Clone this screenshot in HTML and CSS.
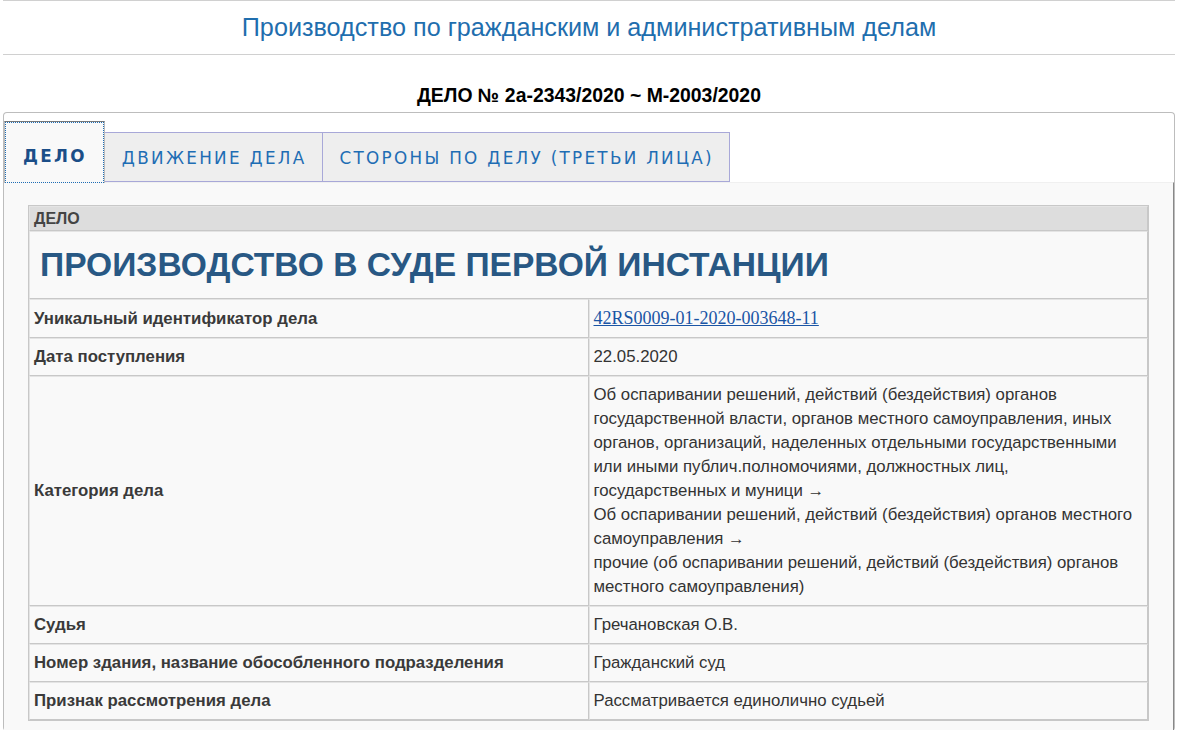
FILE: index.html
```html
<!DOCTYPE html>
<html lang="ru">

<head>
  <meta charset="UTF-8" />
  <title>Производство по гражданским и административным делам</title>
  <link rel="stylesheet" href="styles.css">
</head>

<body>
  <div class="pageTitle">Производство по гражданским и административным делам</div>

  <h2 class="caseNo">ДЕЛО № 2а-2343/2020 ~ М-2003/2020</h2>

  <div class="tabsBox">
    <ul class="tabs">
      <li class="tab active"><a href="#">ДЕЛО</a></li>
      <li class="tab"><a href="#">ДВИЖЕНИЕ ДЕЛА</a></li>
      <li class="tab"><a href="#">СТОРОНЫ ПО ДЕЛУ (ТРЕТЬИ ЛИЦА)</a></li>
    </ul>

    <div class="panel">
      <table class="caseTable">
        <tr>
          <th class="tableHead" colspan="2">ДЕЛО</th>
        </tr>
        <tr>
          <td class="instance" colspan="2">ПРОИЗВОДСТВО В СУДЕ ПЕРВОЙ ИНСТАНЦИИ</td>
        </tr>
        <tr>
          <td class="label">Уникальный идентификатор дела</td>
          <td><a class="uid" href="#">42RS0009-01-2020-003648-11</a></td>
        </tr>
        <tr>
          <td class="label">Дата поступления</td>
          <td>22.05.2020</td>
        </tr>
        <tr>
          <td class="label">Категория дела</td>
          <td class="category">Об оспаривании решений, действий (бездействия) органов государственной власти, органов местного самоуправления, иных органов, организаций, наделенных отдельными государственными или иными публич.полномочиями, должностных лиц, государственных и муници &#8594;<br>Об оспаривании решений, действий (бездействия) органов местного самоуправления &#8594;<br>прочие (об оспаривании решений, действий (бездействия) органов местного самоуправления)</td>
        </tr>
        <tr>
          <td class="label">Судья</td>
          <td>Гречановская О.В.</td>
        </tr>
        <tr>
          <td class="label">Номер здания, название обособленного подразделения</td>
          <td>Гражданский суд</td>
        </tr>
        <tr>
          <td class="label">Признак рассмотрения дела</td>
          <td>Рассматривается единолично судьей</td>
        </tr>
      </table>
    </div>
  </div>
</body>

</html>
```

FILE: styles.css
```css
body {
  margin: 0;
  font-family: 'Liberation Sans', Arial, sans-serif;
  font-size: 16.8px;
  color: #333;
  background: #fff;
}

.pageTitle {
  margin: 0 25px 0 3px;
  border-top: 1px solid #d0d0d0;
  border-bottom: 1px solid #d0d0d0;
  height: 53px;
  line-height: 52px;
  text-align: center;
  font-size: 25.2px;
  color: #1f6eae;
}

.caseNo {
  margin: 30px 25px 7px 3px;
  line-height: 20px;
  text-align: center;
  font-size: 19.4px;
  font-weight: bold;
  color: #000;
}

.tabsBox {
  margin: 0 25px 0 3px;
  border: 1px solid #bdbdbd;
  border-radius: 4px;
  border-bottom: none;
}

.tabs {
  display: flex;
  align-items: flex-end;
  list-style: none;
  margin: 0;
  padding: 8px 0 0;
}

.tab {
  height: 48px;
  border: 1px solid #a8a8d8;
  border-left: none;
  background: #eeeeee;
}

.tab a {
  display: block;
  height: 100%;
  padding: 0 15px 0 17px;
  line-height: 50px;
  font-family: 'DejaVu Sans', Verdana, sans-serif;
  font-size: 16.8px;
  letter-spacing: 2.3px;
  color: #1e6db4;
  text-decoration: none;
}

.tab.active {
  height: 61px;
  border: 1px solid #bbb;
  border-top-color: #777;
  border-bottom: none;
  background: #f9f9f9;
  margin-bottom: -1px;
}

.tab.active a {
  box-sizing: border-box;
  height: 61px;
  padding: 8px 17px 0 18px;
  line-height: 52px;
  font-weight: bold;
  color: #1b4e88;
  outline: 1px dotted #1e6db4;
  outline-offset: -1px;
}

.panel {
  background: #f9f9f9;
  border-top: 1px solid #f0f0f0;
  border-right: 1px solid #888;
  padding: 22px 24px 10px;
}

.caseTable {
  width: 100%;
  border-collapse: separate;
  border-spacing: 0;
  border: 1px solid #c8c8c8;
}

.caseTable td,
.caseTable th {
  border: 1px solid #c8c8c8;
  border-top-color: #e4e4e4;
  border-left-color: #e4e4e4;
  text-align: left;
  vertical-align: middle;
}

.caseTable td {
  padding: 8px 4px;
  line-height: 20px;
  width: 50%;
}

.tableHead {
  padding: 3px 4px 2px;
  line-height: 18px;
  background: #dddddd;
  font-size: 16px;
  font-weight: bold;
  color: #444;
}

.caseTable td.instance {
  height: 66px;
  padding: 0 10px;
  font-size: 33.6px;
  font-weight: bold;
  color: #285884;
}

.label {
  font-weight: bold;
  color: #3a3a3a;
}

.caseTable td.category {
  line-height: 24px;
  padding-top: 6px;
  padding-bottom: 6px;
}

.uid {
  font-family: 'Liberation Serif', 'Times New Roman', serif;
  font-size: 18px;
  line-height: 20px;
  color: #1a55a5;
}
```
